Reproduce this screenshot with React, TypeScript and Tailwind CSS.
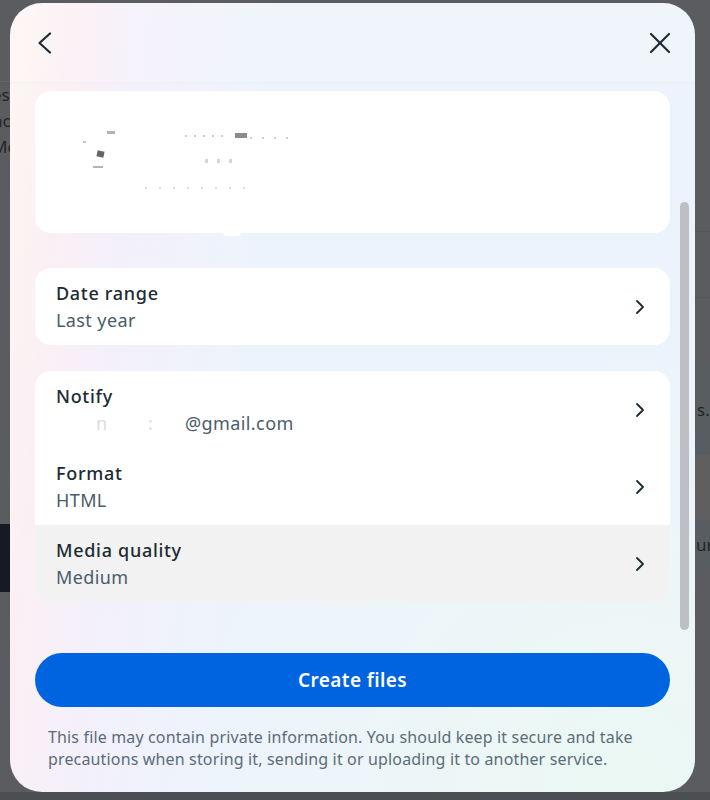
import { ChevronRight } from "lucide-react";

const font = { fontFamily: '"Noto Sans", "Liberation Sans", sans-serif' };

function Row({
  title,
  value,
  muted,
}: {
  title: string;
  value: React.ReactNode;
  muted?: boolean;
}) {
  return (
    <div
      className={
        "flex h-[77px] items-center justify-between pl-[21px] pr-[18px] " +
        (muted ? "bg-[#f2f2f2]" : "bg-white")
      }
    >
      <div className="flex flex-col gap-[3px]">
        <span className="text-[18px] font-medium leading-[24px] tracking-[0.7px] text-[#1c2b33]">
          {title}
        </span>
        <span className="text-[18px] leading-[24px] tracking-[0.4px] text-[#4a5c6a]">{value}</span>
      </div>
      <ChevronRight size={24} strokeWidth={1.8} className="text-[#1c2b33]" />
    </div>
  );
}

function Backdrop() {
  return (
    <div className="flex h-full w-full justify-between text-[17px] text-[#222427]">
      <div className="flex w-[10px] flex-col overflow-hidden">
        <div className="h-[82px] border-b border-[#65666a]" />
        <div className="-ml-[8px] flex flex-col leading-[26px]">
          <span>es</span>
          <span>nc</span>
          <span>Me</span>
        </div>
        <div className="mt-[364px] h-[68px] bg-[#161b22]" />
      </div>
      <div className="flex w-[15px] flex-col overflow-hidden">
        <div className="h-[232px] border-b border-[#55565a]" />
        <div className="h-[66px] border-b border-[#55565a]" />
        <div className="h-[67px]" />
        <div className="flex h-[90px] items-center bg-[#585d62] pl-[2px]">s.</div>
        <div className="h-[65px] bg-[#5f5f60]" />
        <div className="flex h-[50px] items-center bg-[#585d62] pl-[1px]">ur</div>
      </div>
    </div>
  );
}

export default function App() {
  return (
    <div className="relative h-[800px] w-[710px] overflow-hidden bg-[#5b5c5f]" style={font}>
      <Backdrop />
      <div className="absolute bottom-0 left-0 h-[8px] w-full bg-[#4b4e52]" />

      <div className="absolute left-[10px] top-[3px] flex h-[789px] w-[685px] flex-col overflow-hidden rounded-[32px] bg-[radial-gradient(circle_at_90%_100%,#ebf8f3_0%,rgba(235,248,243,0)_45%),linear-gradient(95deg,#fdf7f2_0%,#fbeff4_8%,#f3f0fb_18%,#edf3fc_35%,#edf3fc_100%)]">
        {/* header */}
        <div className="flex h-[80px] shrink-0 items-center justify-between border-b border-[rgba(205,218,232,0.18)] bg-[rgba(255,255,255,0.2)] pl-[27px] pr-[24px] text-[#1c2b33]">
          <svg width="16" height="22" viewBox="0 0 16 22" fill="none" stroke="currentColor" strokeWidth="2.2" strokeLinecap="round" strokeLinejoin="round">
            <polyline points="13,1.5 2.5,11 13,20.5" />
          </svg>
          <svg width="22" height="22" viewBox="0 0 22 22" fill="none" stroke="currentColor" strokeWidth="2.2" strokeLinecap="round">
            <line x1="2" y1="2" x2="20" y2="20" />
            <line x1="20" y1="2" x2="2" y2="20" />
          </svg>
        </div>

        {/* scroll body */}
        <div className="relative h-[554px] shrink-0">
          <div className="flex flex-col px-[25px] pt-[8px]">
            <div className="relative h-[142px] rounded-[16px] bg-white">
              <div className="absolute left-[62px] top-[60px] h-[6px] w-[7px] rotate-12 bg-[#3f3f3f] opacity-80" />
              <div className="absolute left-[72px] top-[40px] h-[3px] w-[8px] bg-[#9b9484] opacity-70" />
              <div className="absolute left-[48px] top-[50px] h-[2px] w-[3px] bg-[#8a8a8a] opacity-50" />
              <div className="absolute left-[58px] top-[75px] h-[2px] w-[10px] bg-[#6a6a6a] opacity-50" />
              <div className="absolute left-[150px] top-[44px] h-[2px] w-[40px] bg-[repeating-linear-gradient(90deg,rgba(90,90,90,0.3)_0_2px,transparent_2px_9px)]" />
              <div className="absolute left-[200px] top-[42px] h-[5px] w-[12px] bg-[#3d3d3d] opacity-60" />
              <div className="absolute left-[215px] top-[46px] h-[2px] w-[40px] bg-[repeating-linear-gradient(90deg,rgba(90,90,90,0.3)_0_2px,transparent_2px_12px)]" />
              <div className="absolute left-[170px] top-[68px] h-[4px] w-[30px] bg-[repeating-linear-gradient(90deg,rgba(90,90,90,0.25)_0_3px,transparent_3px_12px)]" />
              <div className="absolute left-[110px] top-[96px] h-[2px] w-[110px] bg-[repeating-linear-gradient(90deg,rgba(120,120,120,0.25)_0_2px,transparent_2px_14px)]" />
              <div className="absolute -bottom-[3px] left-[188px] h-[8px] w-[18px] rounded-full bg-white" />
            </div>

            <div className="mt-[35px] overflow-hidden rounded-[16px] bg-white">
              <Row title="Date range" value="Last year" />
            </div>

            <div className="mt-[26px] overflow-hidden rounded-[16px] bg-white">
              <Row
                title="Notify"
                value={
                  <span className="flex">
                    <span className="relative inline-block w-[129px]">
                      <span className="absolute left-[40px] text-[#b5bcc2] opacity-50">n</span>
                      <span className="absolute left-[92px] text-[#b5bcc2] opacity-50">:</span>
                    </span>
                    @gmail.com
                  </span>
                }
              />
              <Row title="Format" value="HTML" />
              <Row title="Media quality" value="Medium" muted />
            </div>
          </div>

          <div className="absolute right-[6px] top-[119px] h-[428px] w-[9px] rounded-full bg-[#bcc0c4]" />
        </div>

        {/* footer */}
        <div className="flex flex-col px-[25px] pt-[16px]">
          <button className="flex h-[54px] items-center justify-center rounded-full bg-[#0064e0] text-[19px] font-semibold tracking-[0.4px] text-white">
            Create files
          </button>
          <p className="mt-[19px] px-[13px] text-[16px] leading-[22px] tracking-[0.15px] text-[#5d6c78]">
            This file may contain private information. You should keep it secure and take
            precautions when storing it, sending it or uploading it to another service.
          </p>
        </div>
      </div>
    </div>
  );
}
